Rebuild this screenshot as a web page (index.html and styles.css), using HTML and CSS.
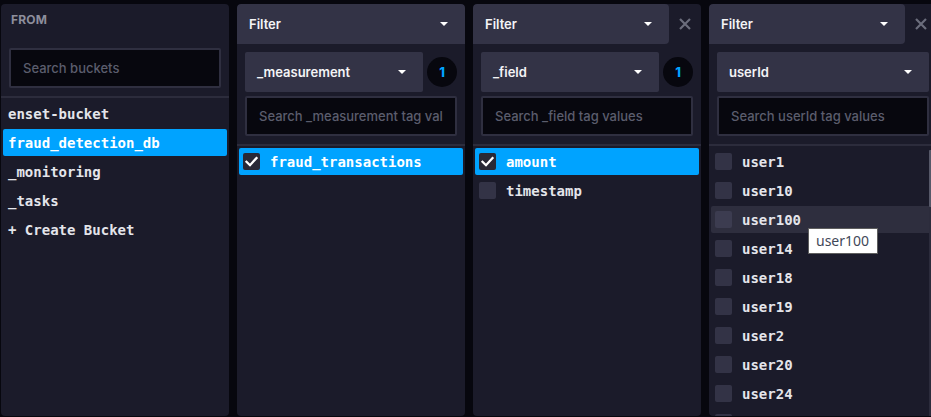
FILE: index.html
```html
<!DOCTYPE html>
<html lang="en">
<head>
<meta charset="utf-8">
<title>Query Builder</title>
<link rel="stylesheet" href="styles.css">
</head>
<body>
<div class="builder">
  <section class="panel">
    <div class="from-head">FROM</div>
    <div class="controls">
      <input class="search" type="text" placeholder="Search buckets">
    </div>
    <ul class="list">
      <li class="row plain">enset-bucket</li>
      <li class="row plain selected">fraud_detection_db</li>
      <li class="row plain">_monitoring</li>
      <li class="row plain">_tasks</li>
      <li class="row plain">+ Create Bucket</li>
    </ul>
  </section>

  <section class="panel">
    <div class="head-bar">
      <div class="head full">Filter <svg class="caret" width="8" height="4" viewBox="0 0 8 4"><polygon points="0,0 8,0 4,4"/></svg></div>
    </div>
    <div class="controls">
      <div class="key-row">
        <div class="dropdown">_measurement <svg class="caret" width="8" height="4" viewBox="0 0 8 4"><polygon points="0,0 8,0 4,4"/></svg></div>
        <span class="badge">1</span>
      </div>
      <input class="search" type="text" placeholder="Search _measurement tag values">
    </div>
    <ul class="list">
      <li class="row selected"><span class="box checked"><svg width="17" height="17" viewBox="0 0 17 17"><polyline points="3.5,8.8 7,12.2 13.5,5"/></svg></span>fraud_transactions</li>
    </ul>
  </section>

  <section class="panel">
    <div class="head-bar">
      <div class="head">Filter <svg class="caret" width="8" height="4" viewBox="0 0 8 4"><polygon points="0,0 8,0 4,4"/></svg></div>
      <button class="close" type="button"><svg width="12" height="12" viewBox="0 0 12 12"><path d="M1 1L11 11M11 1L1 11"/></svg></button>
    </div>
    <div class="controls">
      <div class="key-row">
        <div class="dropdown">_field <svg class="caret" width="8" height="4" viewBox="0 0 8 4"><polygon points="0,0 8,0 4,4"/></svg></div>
        <span class="badge">1</span>
      </div>
      <input class="search" type="text" placeholder="Search _field tag values">
    </div>
    <ul class="list">
      <li class="row selected"><span class="box checked"><svg width="17" height="17" viewBox="0 0 17 17"><polyline points="3.5,8.8 7,12.2 13.5,5"/></svg></span>amount</li>
      <li class="row"><span class="box"></span>timestamp</li>
    </ul>
  </section>

  <section class="panel">
    <div class="head-bar">
      <div class="head">Filter <svg class="caret" width="8" height="4" viewBox="0 0 8 4"><polygon points="0,0 8,0 4,4"/></svg></div>
      <button class="close" type="button"><svg width="12" height="12" viewBox="0 0 12 12"><path d="M1 1L11 11M11 1L1 11"/></svg></button>
    </div>
    <div class="controls">
      <div class="key-row">
        <div class="dropdown">userId <svg class="caret" width="8" height="4" viewBox="0 0 8 4"><polygon points="0,0 8,0 4,4"/></svg></div>
      </div>
      <input class="search" type="text" placeholder="Search userId tag values">
    </div>
    <ul class="list">
      <li class="row"><span class="box"></span>user1</li>
      <li class="row"><span class="box"></span>user10</li>
      <li class="row hover"><span class="box"></span>user100</li>
      <li class="row"><span class="box"></span>user14</li>
      <li class="row"><span class="box"></span>user18</li>
      <li class="row"><span class="box"></span>user19</li>
      <li class="row"><span class="box"></span>user2</li>
      <li class="row"><span class="box"></span>user20</li>
      <li class="row"><span class="box"></span>user24</li>
      <li class="row"><span class="box"></span></li>
    </ul>
    <div class="scrollbar"><div class="thumb"></div></div>
    <div class="tooltip">user100</div>
  </section>
</div>
</body>
</html>
```

FILE: styles.css
```css
* { box-sizing: border-box; }

html, body {
  margin: 0;
  padding: 0;
  background: #07070e;
  overflow: hidden;
  height: 417px;
}

body {
  font-family: Inter, "Noto Sans", sans-serif;
}

.builder {
  display: flex;
  gap: 8px;
  padding: 4px 0 0 1px;
}

.panel {
  position: relative;
  flex: 0 0 228px;
  width: 228px;
  height: 412px;
  background: #1b1b2a;
  border-radius: 4px;
  display: flex;
  flex-direction: column;
  overflow: hidden;
}

.from-head {
  height: 36px;
  padding: 9px 10px 0;
  font-size: 12px;
  font-weight: 700;
  line-height: 14px;
  color: #8d8e9c;
  letter-spacing: 0.2px;
}

.head-bar {
  display: flex;
  height: 40px;
  flex: 0 0 40px;
}

.head {
  flex: 1;
  display: flex;
  align-items: center;
  justify-content: space-between;
  padding: 0 17px 0 12px;
  background: #333346;
  border-radius: 4px 4px 4px 0;
  color: #f4f4f6;
  font-size: 13px;
  font-weight: 600;
}

.head.full {
  border-radius: 4px 4px 0 0;
}

.caret { fill: #ffffff; display: block; }

.close {
  flex: 0 0 32px;
  width: 32px;
  border: 0;
  background: transparent;
  padding: 0;
  display: flex;
  align-items: center;
  justify-content: center;
}

.close svg path {
  stroke: #6b6d7c;
  stroke-width: 2.2;
  fill: none;
}

.controls {
  display: flex;
  flex-direction: column;
  gap: 4px;
  padding: 8px;
  border-bottom: 2px solid #2c2c3c;
}

.key-row {
  display: flex;
  align-items: center;
  gap: 4px;
}

.dropdown {
  flex: 1;
  height: 40px;
  display: flex;
  align-items: center;
  justify-content: space-between;
  padding: 0 17px 0 12px;
  background: #333346;
  border-radius: 2px;
  color: #f4f4f6;
  font-size: 13px;
  font-weight: 600;
}

.badge {
  flex: 0 0 30px;
  width: 30px;
  height: 30px;
  border-radius: 50%;
  background: #07070e;
  color: #00a3ff;
  font-size: 13px;
  font-weight: 800;
  display: flex;
  align-items: center;
  justify-content: center;
}

.search {
  width: 100%;
  height: 40px;
  margin: 0;
  padding: 0 12px;
  background: #07070e;
  border: 2px solid #2f2f40;
  border-radius: 2px;
  color: #e7e8eb;
  font-family: Inter, "Noto Sans", sans-serif;
  font-size: 13px;
  font-weight: 500;
  outline: none;
}

.search::placeholder {
  color: #5b5d6d;
  opacity: 1;
}

.list {
  list-style: none;
  margin: 0;
  padding: 2px;
  display: flex;
  flex-direction: column;
  gap: 2px;
}

.row {
  height: 27px;
  flex: 0 0 27px;
  display: flex;
  align-items: center;
  gap: 10px;
  padding: 0 4px;
  border-radius: 2px;
  font-family: "DejaVu Sans Mono", "Liberation Mono", monospace;
  font-size: 14px;
  font-weight: 700;
  color: #e4e5ea;
  white-space: nowrap;
}

.row.plain { padding-left: 5px; }

.row.selected {
  background: #00a3ff;
  color: #ffffff;
}

.row.hover {
  background: #2e2e3e;
}

.box {
  flex: 0 0 17px;
  width: 17px;
  height: 17px;
  border-radius: 2px;
  background: #333346;
  display: block;
}

.row.hover .box { background: #3c3c50; }

.box.checked { background: #292936; }

.box svg { display: block; }

.box svg polyline {
  fill: none;
  stroke: #ffffff;
  stroke-width: 2.3;
  stroke-linecap: square;
}

.scrollbar {
  position: absolute;
  left: 220px;
  top: 146px;
  width: 3px;
  bottom: 0;
  background: #2c2c3c;
}

.thumb {
  height: 57px;
  background: #565868;
  border-radius: 1px;
}

.tooltip {
  position: absolute;
  left: 99px;
  top: 224px;
  width: 70px;
  height: 26px;
  background: #ffffff;
  border: 1px solid #5e5e5e;
  color: #3f4859;
  font-family: "Noto Sans", "DejaVu Sans", sans-serif;
  font-size: 14px;
  line-height: 24px;
  padding: 0 7px;
}
```
